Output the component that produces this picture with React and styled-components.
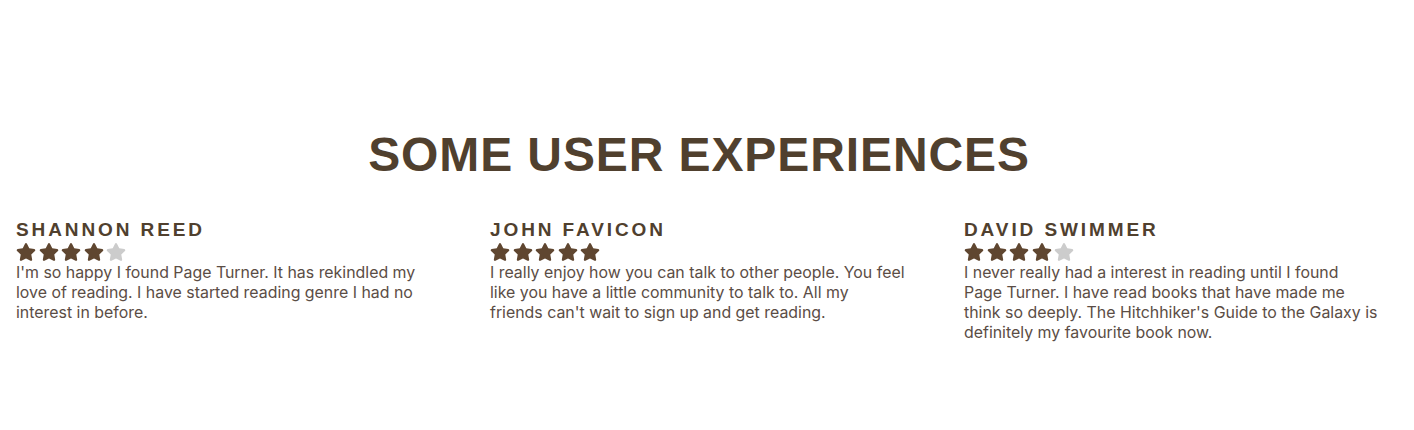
import React from "react";
import styled, { createGlobalStyle } from "styled-components";
import { FaStar } from "react-icons/fa";

const Global = createGlobalStyle`
  html { overflow-y: scroll; }
  html::-webkit-scrollbar { width: 4px; }
  html::-webkit-scrollbar-track { background: #f1f1f1; }
  html::-webkit-scrollbar-thumb { background: #c1c1c1; }
  body {
    margin: 0;
    background: #ffffff;
    font-family: Inter, "Liberation Sans", sans-serif;
  }
`;

const Section = styled.section`
  padding: 131px 0 60px;
  display: flex;
  flex-direction: column;
`;

const Heading = styled.h2`
  margin: 0;
  padding-right: 16px;
  text-align: center;
  font-family: "Liberation Sans", Arial, sans-serif;
  font-weight: 700;
  font-size: 48px;
  line-height: 48px;
  letter-spacing: 0.9px;
  color: #50402e;
`;

const Grid = styled.div`
  margin-top: 41px;
  padding-left: 16px;
  display: grid;
  grid-template-columns: repeat(3, 430px);
  column-gap: 44px;
`;

const Card = styled.article`
  display: flex;
  flex-direction: column;
`;

const Name = styled.h3`
  margin: 0;
  font-family: "Liberation Sans", Arial, sans-serif;
  font-weight: 700;
  font-size: 19px;
  line-height: 19px;
  letter-spacing: 2.9px;
  color: #50402e;
`;

const Stars = styled.div`
  margin-top: 4px;
  height: 18px;
  display: flex;
  gap: 2.5px;
`;

const Star = styled(FaStar)`
  width: 20px;
  height: 18px;
  color: ${(p) => (p.$on ? "#5f4630" : "#cccccc")};
`;

const Quote = styled.p`
  margin: 2px 0 0;
  font-family: Inter, "Liberation Sans", sans-serif;
  font-size: 15.9px;
  line-height: 20px;
  color: #5b4d45;
`;

const reviews = [
  {
    name: "SHANNON REED",
    rating: 4,
    lines: [
      "I'm so happy I found Page Turner. It has rekindled my",
      "love of reading. I have started reading genre I had no",
      "interest in before.",
    ],
  },
  {
    name: "JOHN FAVICON",
    rating: 5,
    lines: [
      "I really enjoy how you can talk to other people. You feel",
      "like you have a little community to talk to. All my",
      "friends can't wait to sign up and get reading.",
    ],
  },
  {
    name: "DAVID SWIMMER",
    rating: 4,
    lines: [
      "I never really had a interest in reading until I found",
      "Page Turner. I have read books that have made me",
      "think so deeply. The Hitchhiker's Guide to the Galaxy is",
      "definitely my favourite book now.",
    ],
  },
];

export default function App() {
  return (
    <>
      <Global />
      <Section>
        <Heading>SOME USER EXPERIENCES</Heading>
        <Grid>
          {reviews.map((r) => (
            <Card key={r.name}>
              <Name>{r.name}</Name>
              <Stars>
                {[0, 1, 2, 3, 4].map((i) => (
                  <Star key={i} $on={i < r.rating} />
                ))}
              </Stars>
              <Quote>
                {r.lines.map((line, i) => (
                  <React.Fragment key={i}>
                    {i > 0 && <br />}
                    {line}
                  </React.Fragment>
                ))}
              </Quote>
            </Card>
          ))}
        </Grid>
      </Section>
    </>
  );
}
